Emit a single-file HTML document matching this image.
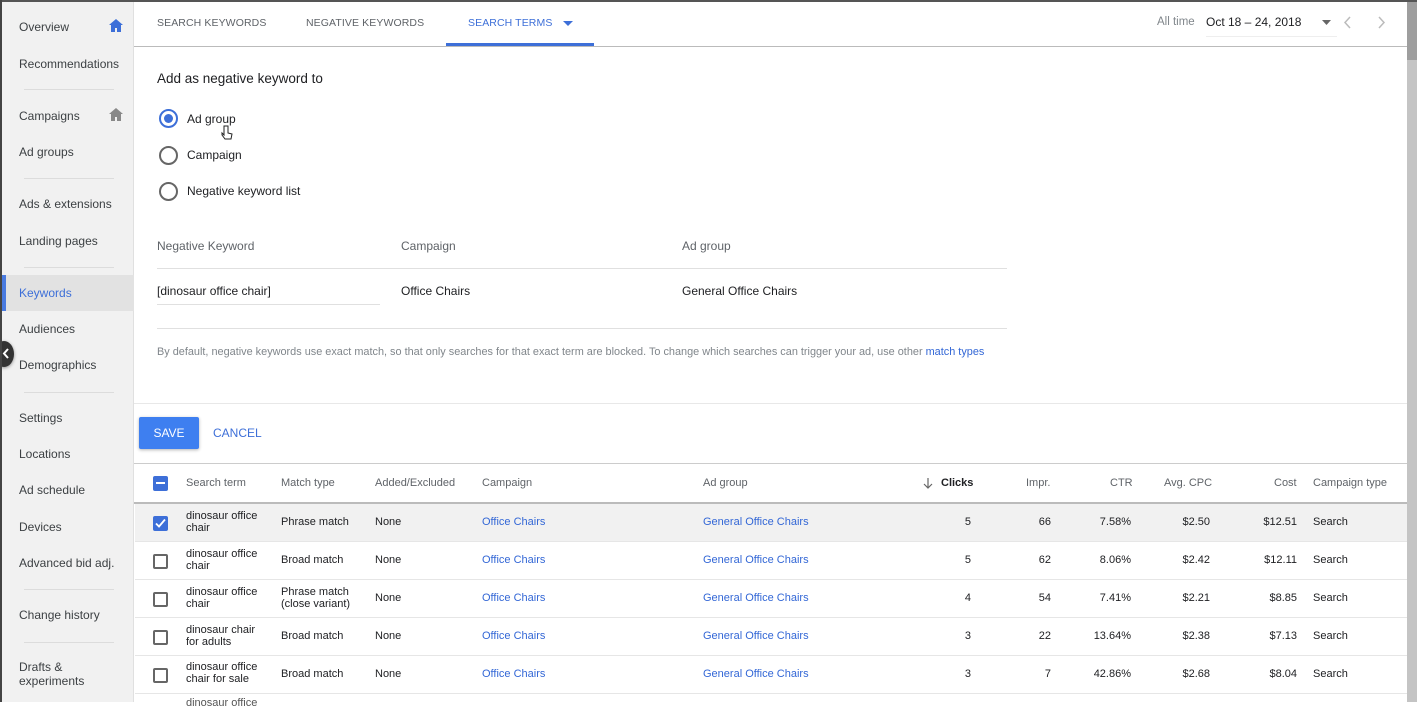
<!DOCTYPE html>
<html><head><meta charset="utf-8"><style>
*{margin:0;padding:0;box-sizing:border-box}
body{width:1417px;height:702px;overflow:hidden;background:#fff;font-family:"Liberation Sans",Arial,sans-serif;color:#202124;position:relative}
.topbar{position:absolute;left:0;top:0;width:1417px;height:2px;background:#555;z-index:5}
.leftedge{position:absolute;left:0;top:0;width:2px;height:702px;background:#444;z-index:5}
.side{position:absolute;left:2px;top:2px;width:132px;height:700px;background:#f1f1f1;border-right:1px solid #e0e0e0}
.side .it{position:absolute;left:17px;font-size:12px;color:#3c4043}
.side .sep{position:absolute;left:22px;width:90px;height:1px;background:#dcdcdc}
.sel{position:absolute;left:2px;top:275px;width:132px;height:36px;background:#e2e2e2;border-left:4px solid #4a7be0}
.abs{position:absolute}
.tab{position:absolute;top:17px;font-size:10.5px;color:#5f6368;letter-spacing:.1px}
.hr{position:absolute;height:1px;background:#e0e0e0}
.radio{position:absolute;left:159px;width:19px;height:19px;border:2px solid #666;border-radius:50%}
.lbl{position:absolute;font-size:12px;color:#202124}
.gl{position:absolute;font-size:12px;color:#5f6368}
.th{position:absolute;top:477px;font-size:11px;color:#5f6368}
.row{position:absolute;left:135px;width:1272px;height:38px;border-bottom:1px solid #e6e6e6}
.c{position:absolute;font-size:11px;color:#202124;line-height:12px}
.lnk{color:#3367d6}
.cb{position:absolute;left:18px;top:12px;width:15px;height:15px;border:2px solid #666;border-radius:2px}
.r{text-align:right}
</style></head><body>
<div class="topbar"></div><div class="leftedge"></div>
<div class="side"></div>
<div class="sel"></div>
<div class="side" style="background:none;border:none">
<div class="it" style="top:18px">Overview</div>
<svg class="abs" style="left:107px;top:17px" width="14" height="13" viewBox="0 0 14 13"><path d="M7 0L0 6h2v7h4V9h2v4h4V6h2z" fill="#3d6fd8"/></svg>
<div class="it" style="top:55px">Recommendations</div>
<div class="sep" style="top:87px"></div>
<div class="it" style="top:107px">Campaigns</div>
<svg class="abs" style="left:107px;top:106px" width="14" height="13" viewBox="0 0 14 13"><path d="M7 0L0 6h2v7h4V9h2v4h4V6h2z" fill="#888"/></svg>
<div class="it" style="top:143px">Ad groups</div>
<div class="sep" style="top:176px"></div>
<div class="it" style="top:195px">Ads &amp; extensions</div>
<div class="it" style="top:232px">Landing pages</div>
<div class="sep" style="top:265px"></div>
<div class="it" style="top:284px;color:#3d6fd8">Keywords</div>
<div class="it" style="top:320px">Audiences</div>
<div class="it" style="top:356px">Demographics</div>
<div class="sep" style="top:390px"></div>
<div class="it" style="top:409px">Settings</div>
<div class="it" style="top:445px">Locations</div>
<div class="it" style="top:481px">Ad schedule</div>
<div class="it" style="top:518px">Devices</div>
<div class="it" style="top:554px">Advanced bid adj.</div>
<div class="sep" style="top:587px"></div>
<div class="it" style="top:606px">Change history</div>
<div class="sep" style="top:640px"></div>
<div class="it" style="top:658px;line-height:14px">Drafts &amp;<br>experiments</div>
</div>
<div class="abs" style="left:-6px;top:341px;width:20px;height:26px;border-radius:50%;background:#333;box-shadow:0 1px 3px rgba(0,0,0,.4)"></div>
<svg class="abs" style="left:2px;top:348px" width="8" height="11" viewBox="0 0 8 11"><path d="M6 1L2 5.5 6 10" stroke="#fff" stroke-width="2" fill="none"/></svg>

<div class="abs" style="left:1407px;top:2px;width:10px;height:700px;background:#c4c4c4"></div>
<div class="abs" style="left:1407px;top:2px;width:10px;height:58px;background:#9e9e9e"></div>

<div class="tab" style="left:157px">SEARCH KEYWORDS</div>
<div class="tab" style="left:306px">NEGATIVE KEYWORDS</div>
<div class="tab" style="left:468px;color:#3d6fd8">SEARCH TERMS</div>
<svg class="abs" style="left:563px;top:21px" width="10" height="5"><path d="M0 0h10L5 5z" fill="#3d6fd8"/></svg>
<div class="abs" style="left:446px;top:43px;width:148px;height:3px;background:#3d6fd8"></div>
<div class="hr" style="left:134px;top:46px;width:1273px;background:#bbb"></div>
<div class="abs" style="left:1157px;top:16px;font-size:11.5px;color:#80868b">All time</div>
<div class="abs" style="left:1206px;top:15px;font-size:12px;color:#202124">Oct 18 – 24, 2018</div>
<svg class="abs" style="left:1322px;top:20px" width="9" height="5"><path d="M0 0h9L4.5 5z" fill="#666"/></svg>
<div class="hr" style="left:1206px;top:36px;width:131px;background:#eee"></div>
<svg class="abs" style="left:1344px;top:16px" width="8" height="13"><path d="M6 1L1 6.5 6 12" stroke="#bbb" stroke-width="1.5" fill="none"/></svg>
<svg class="abs" style="left:1377px;top:16px" width="8" height="13"><path d="M2 1l5 5.5L2 12" stroke="#bbb" stroke-width="1.5" fill="none"/></svg>

<div class="lbl" style="left:157px;top:71px;font-size:13.5px">Add as negative keyword to</div>
<div class="radio" style="top:109px;border-color:#3d6fd8"><div style="position:absolute;left:3px;top:3px;width:9px;height:9px;border-radius:50%;background:#3d6fd8"></div></div>
<div class="lbl" style="left:187px;top:112px">Ad group</div>
<div class="radio" style="top:146px"></div>
<div class="lbl" style="left:187px;top:148px">Campaign</div>
<div class="radio" style="top:182px"></div>
<div class="lbl" style="left:187px;top:184px">Negative keyword list</div>
<svg class="abs" style="left:221px;top:125px" width="12" height="16" viewBox="0 0 12 16"><path d="M3 1v9l-2-2v2l3 4h6l1-5-4-1V1z" fill="#fff" stroke="#222" stroke-width="1"/></svg>
<div class="gl" style="left:157px;top:239px">Negative Keyword</div>
<div class="gl" style="left:401px;top:239px">Campaign</div>
<div class="gl" style="left:682px;top:239px">Ad group</div>
<div class="hr" style="left:157px;top:268px;width:850px"></div>
<div class="lbl" style="left:157px;top:284px">[dinosaur office chair]</div>
<div class="lbl" style="left:401px;top:284px">Office Chairs</div>
<div class="lbl" style="left:682px;top:284px">General Office Chairs</div>
<div class="hr" style="left:157px;top:304px;width:223px"></div>
<div class="hr" style="left:157px;top:328px;width:850px"></div>
<div class="abs" style="left:157px;top:346px;font-size:10.9px;color:#80868b;white-space:nowrap">By default, negative keywords use exact match, so that only searches for that exact term are blocked. To change which searches can trigger your ad, use other <span class="lnk">match types</span></div>
<div class="hr" style="left:134px;top:403px;width:1273px;background:#e8e8e8"></div>
<div class="abs" style="left:139px;top:417px;width:60px;height:32px;background:#3e7ff0;border-radius:2px;box-shadow:0 1px 3px rgba(0,0,0,.3);color:#fff;font-size:12px;text-align:center;line-height:32px">SAVE</div>
<div class="abs" style="left:213px;top:426px;font-size:12px;color:#3d6fd8">CANCEL</div>
<div class="hr" style="left:134px;top:463px;width:1273px;background:#ccc"></div>

<div class="abs" style="left:153px;top:476px;width:15px;height:15px;background:#3d6fd8;border-radius:2px"><div style="position:absolute;left:3px;top:6px;width:9px;height:2px;background:#fff"></div></div>
<div class="th" style="left:186px">Search term</div>
<div class="th" style="left:281px">Match type</div>
<div class="th" style="left:375px">Added/Excluded</div>
<div class="th" style="left:482px">Campaign</div>
<div class="th" style="left:703px">Ad group</div>
<svg class="abs" style="left:923px;top:478px" width="10" height="11"><path d="M5 0v10M1 6l4 4 4-4" stroke="#666" stroke-width="1.2" fill="none"/></svg>
<div class="th" style="left:941px;color:#202124;font-weight:bold">Clicks</div>
<div class="th" style="left:1026px">Impr.</div>
<div class="th" style="left:1110px">CTR</div>
<div class="th" style="left:1164px">Avg. CPC</div>
<div class="th" style="left:1274px">Cost</div>
<div class="th" style="left:1313px">Campaign type</div>
<div class="hr" style="left:134px;top:502px;width:1273px;height:2px;background:#bbb"></div>

<div class="row" style="top:504px;background:#f1f1f1"><div class="cb" style="background:#3d6fd8;border-color:#3d6fd8"><svg width="11" height="11" style="position:absolute;left:0;top:0"><path d="M1 5.5l3 3 6-7" stroke="#fff" stroke-width="1.8" fill="none"/></svg></div>
<div class="c" style="left:51px;top:6px">dinosaur office<br>chair</div><div class="c" style="left:146px;top:12px">Phrase match</div><div class="c" style="left:240px;top:12px">None</div><div class="c lnk" style="left:347px;top:12px">Office Chairs</div><div class="c lnk" style="left:568px;top:12px">General Office Chairs</div><div class="c r" style="right:436px;top:12px">5</div><div class="c r" style="right:356px;top:12px">66</div><div class="c r" style="right:276px;top:12px">7.58%</div><div class="c r" style="right:197px;top:12px">$2.50</div><div class="c r" style="right:110px;top:12px">$12.51</div><div class="c" style="left:1178px;top:12px">Search</div></div>

<div class="row" style="top:542px"><div class="cb"></div>
<div class="c" style="left:51px;top:6px">dinosaur office<br>chair</div><div class="c" style="left:146px;top:12px">Broad match</div><div class="c" style="left:240px;top:12px">None</div><div class="c lnk" style="left:347px;top:12px">Office Chairs</div><div class="c lnk" style="left:568px;top:12px">General Office Chairs</div><div class="c r" style="right:436px;top:12px">5</div><div class="c r" style="right:356px;top:12px">62</div><div class="c r" style="right:276px;top:12px">8.06%</div><div class="c r" style="right:197px;top:12px">$2.42</div><div class="c r" style="right:110px;top:12px">$12.11</div><div class="c" style="left:1178px;top:12px">Search</div></div>

<div class="row" style="top:580px"><div class="cb"></div>
<div class="c" style="left:51px;top:6px">dinosaur office<br>chair</div><div class="c" style="left:146px;top:6px">Phrase match<br>(close variant)</div><div class="c" style="left:240px;top:12px">None</div><div class="c lnk" style="left:347px;top:12px">Office Chairs</div><div class="c lnk" style="left:568px;top:12px">General Office Chairs</div><div class="c r" style="right:436px;top:12px">4</div><div class="c r" style="right:356px;top:12px">54</div><div class="c r" style="right:276px;top:12px">7.41%</div><div class="c r" style="right:197px;top:12px">$2.21</div><div class="c r" style="right:110px;top:12px">$8.85</div><div class="c" style="left:1178px;top:12px">Search</div></div>

<div class="row" style="top:618px"><div class="cb"></div>
<div class="c" style="left:51px;top:6px">dinosaur chair<br>for adults</div><div class="c" style="left:146px;top:12px">Broad match</div><div class="c" style="left:240px;top:12px">None</div><div class="c lnk" style="left:347px;top:12px">Office Chairs</div><div class="c lnk" style="left:568px;top:12px">General Office Chairs</div><div class="c r" style="right:436px;top:12px">3</div><div class="c r" style="right:356px;top:12px">22</div><div class="c r" style="right:276px;top:12px">13.64%</div><div class="c r" style="right:197px;top:12px">$2.38</div><div class="c r" style="right:110px;top:12px">$7.13</div><div class="c" style="left:1178px;top:12px">Search</div></div>

<div class="row" style="top:656px"><div class="cb"></div>
<div class="c" style="left:51px;top:5px">dinosaur office<br>chair for sale</div><div class="c" style="left:146px;top:12px">Broad match</div><div class="c" style="left:240px;top:12px">None</div><div class="c lnk" style="left:347px;top:12px">Office Chairs</div><div class="c lnk" style="left:568px;top:12px">General Office Chairs</div><div class="c r" style="right:436px;top:12px">3</div><div class="c r" style="right:356px;top:12px">7</div><div class="c r" style="right:276px;top:12px">42.86%</div><div class="c r" style="right:197px;top:12px">$2.68</div><div class="c r" style="right:110px;top:12px">$8.04</div><div class="c" style="left:1178px;top:12px">Search</div></div>
<div class="c" style="left:186px;top:697px;color:#555">dinosaur office</div>
</body></html>
